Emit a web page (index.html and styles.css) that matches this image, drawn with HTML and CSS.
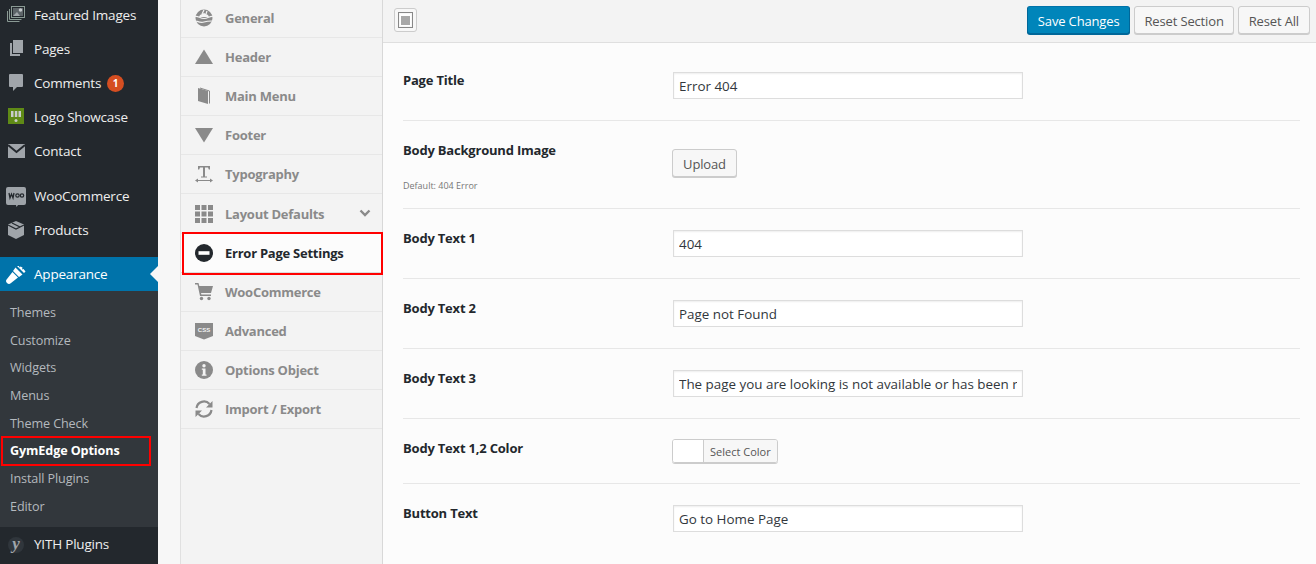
FILE: index.html
```html
<!DOCTYPE html>
<html lang="en">
<head>
  <meta charset="UTF-8">
  <title>GymEdge Options</title>
  <link rel="stylesheet" href="styles.css">
</head>
<body>
  <!-- WordPress admin menu -->
  <aside class="admin-menu">
    <ul class="menu-group first">
      <li class="menu-item">
        <svg class="menu-icon" viewBox="0 0 20 20"><g fill="none" stroke="#8a9a94" stroke-width="1"><rect x="5.5" y="1.5" width="13" height="11"/><path d="M3.5 4v10.500h12M1.500 6v10.500h12"/></g><rect x="7" y="3" width="10" height="8" fill="#5d6468"/><circle cx="14.500" cy="5" r="1.800" fill="#c4c8cb"/><path d="M7 11l4-4 3 4z" fill="#a0a5a9"/></svg>
        <span>Featured Images</span>
      </li>
      <li class="menu-item">
        <svg class="menu-icon" viewBox="0 0 20 20"><path d="M7 1h10v13H7z" fill="#a0a5aa"/><path d="M4 4h2v11h8v2H4z" fill="#a0a5aa"/></svg>
        <span>Pages</span>
      </li>
      <li class="menu-item">
        <svg class="menu-icon" viewBox="0 0 20 20"><path d="M4 1h12a1 1 0 0 1 1 1v11a1 1 0 0 1-1 1h-5l-4 4v-4H4a1 1 0 0 1-1-1V2a1 1 0 0 1 1-1z" fill="#a0a5aa"/></svg>
        <span>Comments</span>
        <b class="count-badge">1</b>
      </li>
      <li class="menu-item">
        <svg class="menu-icon" viewBox="0 0 20 20"><rect x="2" y="1" width="16" height="16" fill="#5f8a16"/><path d="M5 4h2.500v6H5zM8.800 4h2.500v6H8.800zM12.500 4H15v6h-2.500z" fill="#c9ccca"/><circle cx="10" cy="13.500" r="1.500" fill="#c9ccca"/></svg>
        <span>Logo Showcase</span>
      </li>
      <li class="menu-item">
        <svg class="menu-icon" viewBox="0 0 20 20"><path d="M2 3h17v14H2z" fill="#a0a5aa"/><path d="M2 4l8.500 7L19 4" fill="none" stroke="#23282d" stroke-width="2"/></svg>
        <span>Contact</span>
      </li>
    </ul>
    <ul class="menu-group">
      <li class="menu-item">
        <svg class="menu-icon woo-icon" viewBox="0 0 20 20"><path d="M2 0h16a2 2 0 0 1 2 2v14a2 2 0 0 1-2 2h-6l-1.500 2L10 18H2a2 2 0 0 1-2-2V2a2 2 0 0 1 2-2z" fill="#9ea3a8"/><path d="M3 6l1 5 1.500-4 1.500 4 1-5" fill="none" stroke="#23282d" stroke-width="1.300"/><circle cx="11.500" cy="8.500" r="1.700" fill="none" stroke="#23282d" stroke-width="1.200"/><circle cx="16" cy="8.500" r="1.700" fill="none" stroke="#23282d" stroke-width="1.200"/></svg>
        <span>WooCommerce</span>
      </li>
      <li class="menu-item">
        <svg class="menu-icon" viewBox="0 0 20 20"><path d="M10 1l8 3.500v10.500L10 19l-8-4V4.500z" fill="#a0a5aa"/><path d="M2 5l8 4 8-4M6 3l8 4" fill="none" stroke="#23282d" stroke-width="1.200"/></svg>
        <span>Products</span>
      </li>
    </ul>
    <ul class="menu-group">
      <li class="menu-item current">
        <svg class="menu-icon" viewBox="0 0 20 20"><path d="M11 2l7 7 1.500-1.500-2-2.500-1.500.5.500-2-2-1-1 1-.5-1.500zM9.500 3.500L7 7l6 6 3.500-2.500zM6.500 8L1 15a2.500 2.500 0 0 0 4 4l7-5.500z" fill="#fff"/></svg>
        <span>Appearance</span>
      </li>
      <li class="submenu">
        <a class="sub-item">Themes</a>
        <a class="sub-item">Customize</a>
        <a class="sub-item">Widgets</a>
        <a class="sub-item">Menus</a>
        <a class="sub-item">Theme Check</a>
        <a class="sub-item marked">GymEdge Options</a>
        <a class="sub-item">Install Plugins</a>
        <a class="sub-item">Editor</a>
      </li>
      <li class="menu-item">
        <svg class="menu-icon" viewBox="0 0 20 20"><circle cx="10" cy="11" r="8" fill="#30363c"/><text class="yith-mark" x="10" y="15" text-anchor="middle">y</text></svg>
        <span>YITH Plugins</span>
      </li>
    </ul>
  </aside>

  <div class="page-gap"></div>

  <!-- Options panel nav -->
  <nav class="options-nav">
    <a class="nav-item">
      <svg class="nav-icon" viewBox="0 0 18 18"><circle cx="9" cy="9" r="8.500" fill="#8a8a8a"/><path d="M0 7.500c3-1 5 2 9 2s6-3 9-2M1 12c3 1 5 2 8 1s5-1 8-1M9 1L7 5M12 2l-1 3" fill="none" stroke="#f3f3f3" stroke-width="1.200"/><path d="M5 6l4-2 4 2 1 2H4z" fill="#f3f3f3"/></svg>
      General
    </a>
    <a class="nav-item">
      <svg class="nav-icon" viewBox="0 0 18 18"><path d="M9 1.500l9 14.500H0z" fill="#8a8a8a"/></svg>
      Header
    </a>
    <a class="nav-item">
      <svg class="nav-icon" viewBox="0 0 18 18"><path d="M3 1l10 3v13L3 14z" fill="#8a8a8a"/><path d="M5 1l9.500 3v12.500" fill="none" stroke="#8a8a8a"/></svg>
      Main Menu
    </a>
    <a class="nav-item">
      <svg class="nav-icon" viewBox="0 0 18 18"><path d="M0 2h18L9 16.500z" fill="#8a8a8a"/></svg>
      Footer
    </a>
    <a class="nav-item">
      <svg class="nav-icon" viewBox="0 0 18 18"><path d="M3 1h12v3.500h-1.200L13 2.500H10v9h2v1H6v-1h2v-9H5l-.8 2H3z" fill="#8a8a8a"/><path d="M1 15.500h16" stroke="#8a8a8a"/><path d="M0 15.500L3 13.500v4zM18 15.500L15 13.500v4z" fill="#8a8a8a"/></svg>
      Typography
    </a>
    <a class="nav-item">
      <svg class="nav-icon" viewBox="0 0 18 18"><path d="M0 0h5v5H0zM6.500 0h5v5h-5zM13 0h5v5h-5zM0 6.500h5v5H0zM6.500 6.500h5v5h-5zM13 6.500h5v5h-5zM0 13h5v5H0zM6.500 13h5v5h-5zM13 13h5v5h-5z" fill="#8a8a8a"/></svg>
      Layout Defaults
      <svg class="nav-chevron" viewBox="0 0 12 8"><path d="M1.500 1.500L6 6l4.500-4.500" fill="none" stroke="#8a8a8a" stroke-width="2.400"/></svg>
    </a>
    <a class="nav-item active">
      <svg class="nav-icon" viewBox="0 0 18 18"><circle cx="9" cy="9" r="9" fill="#23282d"/><rect x="3.500" y="7.200" width="11" height="3.600" fill="#fff"/></svg>
      Error Page Settings
    </a>
    <a class="nav-item">
      <svg class="nav-icon" viewBox="0 0 18 18"><path d="M0 0h3.500l.8 3H18l-2 7H6l.4 1.500H16V13H5L2.500 1.500H0z" fill="#8a8a8a"/><circle cx="6.500" cy="15.500" r="1.700" fill="#8a8a8a"/><circle cx="14" cy="15.500" r="1.700" fill="#8a8a8a"/></svg>
      WooCommerce
    </a>
    <a class="nav-item">
      <svg class="nav-icon" viewBox="0 0 18 18"><path d="M0 1h18v13l-9 3.500L0 14z" fill="#8a8a8a"/><text class="css-mark" x="9" y="10" text-anchor="middle">CSS</text></svg>
      Advanced
    </a>
    <a class="nav-item">
      <svg class="nav-icon" viewBox="0 0 18 18"><circle cx="9" cy="9" r="9" fill="#8a8a8a"/><circle cx="9" cy="4.800" r="1.700" fill="#f3f3f3"/><path d="M6.800 7.500h3.700v6h1v1.300H6.800v-1.300h1v-4.700h-1z" fill="#f3f3f3"/></svg>
      Options Object
    </a>
    <a class="nav-item">
      <svg class="nav-icon" viewBox="0 0 18 18"><path d="M1.500 8A7.500 7.500 0 0 1 14.500 4M16.500 10A7.500 7.500 0 0 1 3.500 14" fill="none" stroke="#8a8a8a" stroke-width="2.200"/><path d="M17.500 1v6.500H11zM.5 17v-6.500H7z" fill="#8a8a8a"/></svg>
      Import / Export
    </a>
  </nav>

  <!-- Options form -->
  <main class="options-main">
    <header class="options-bar">
      <span class="layout-toggle">
        <svg viewBox="0 0 15 16" width="15" height="16"><rect x=".5" y=".5" width="14" height="15" fill="none" stroke="#888"/><rect x="2" y="2" width="11" height="12" fill="#fff"/><rect x="3" y="4" width="9" height="9" fill="#a8a8a8"/></svg>
      </span>
      <div class="bar-actions">
        <button class="btn btn-primary">Save Changes</button>
        <button class="btn btn-section">Reset Section</button>
        <button class="btn">Reset All</button>
      </div>
    </header>

    <section class="options-form">
      <div class="form-row row-title">
        <div class="row-label"><h4>Page Title</h4></div>
        <input class="text-input" type="text" value="Error 404">
      </div>
      <div class="form-row row-image">
        <div class="row-label">
          <h4>Body Background Image</h4>
          <p class="row-hint">Default: 404 Error</p>
        </div>
        <button class="btn btn-upload">Upload</button>
      </div>
      <div class="form-row">
        <div class="row-label"><h4>Body Text 1</h4></div>
        <input class="text-input" type="text" value="404">
      </div>
      <div class="form-row">
        <div class="row-label"><h4>Body Text 2</h4></div>
        <input class="text-input" type="text" value="Page not Found">
      </div>
      <div class="form-row">
        <div class="row-label"><h4>Body Text 3</h4></div>
        <input class="text-input" type="text" value="The page you are looking is not available or has been removed">
      </div>
      <div class="form-row row-color">
        <div class="row-label"><h4>Body Text 1,2 Color</h4></div>
        <div class="color-picker">
          <span class="color-swatch"></span>
          <span class="color-label">Select Color</span>
        </div>
      </div>
      <div class="form-row row-last">
        <div class="row-label"><h4>Button Text</h4></div>
        <input class="text-input" type="text" value="Go to Home Page">
      </div>
    </section>
  </main>
</body>
</html>
```

FILE: styles.css
```css
*, *::after {
  box-sizing: border-box;
  margin: 0;
  padding: 0;
}
html, body {
  height: 564px;
  overflow: hidden;
}
body {
  display: flex;
  font-family: "Open Sans", sans-serif;
  font-size: 13px;
  color: #444;
  background-color: #f7f7f7;
}

/* admin menu */
.admin-menu {
  width: 158px;
  flex-shrink: 0;
  height: 564px;
  overflow: hidden;
  background-color: #23282d;
}
.menu-group {
  list-style: none;
  margin-top: 11px;
}
.menu-group.first {
  margin-top: -2px;
}
.menu-group:nth-child(3) {
  margin-top: 10px;
}
.menu-item {
  position: relative;
  display: flex;
  align-items: center;
  height: 34px;
  font-size: 13.5px;
  letter-spacing: -0.2px;
  color: #eee;
}
.menu-icon {
  width: 20px;
  height: 20px;
  margin: 0 8px 0 6px;
  flex-shrink: 0;
}
.woo-icon {
  margin-top: 1px;
}
.yith-mark {
  font-family: "Liberation Serif", serif;
  font-size: 17px;
  font-style: italic;
  font-weight: 700;
  fill: #a0a5aa;
}
.menu-item.current {
  background-color: #0073aa;
  color: #fff;
}
/* little notch pointing at the page */
.menu-item.current::after {
  content: "";
  position: absolute;
  right: 0;
  top: 9px;
  border: 8px solid transparent;
  border-right-color: #f7f7f7;
}
.count-badge {
  width: 17px;
  height: 17px;
  margin-left: 6px;
  border-radius: 50%;
  background-color: #d54e21;
  color: #fff;
  font-size: 10px;
  font-weight: 700;
  letter-spacing: 0;
  line-height: 17px;
  text-align: center;
}
.submenu {
  display: flex;
  flex-direction: column;
  padding: 8px 0 6px;
  background-color: #32373c;
}
.sub-item {
  position: relative;
  height: 27.7px;
  padding-left: 10px;
  font-size: 12.6px;
  letter-spacing: -0.1px;
  line-height: 27.7px;
  color: #b4b9be;
}
.sub-item.marked {
  color: #fff;
  font-weight: 700;
}
.sub-item.marked::after {
  content: "";
  position: absolute;
  left: 1px;
  top: -1px;
  width: 150px;
  height: 30px;
  border: 2px solid #f00;
}

.page-gap {
  width: 22px;
  flex-shrink: 0;
}

/* options nav */
.options-nav {
  display: flex;
  flex-direction: column;
  width: 203px;
  flex-shrink: 0;
  margin-top: -1px;
  height: 565px;
  background-color: #f3f3f3;
  border-left: 1px solid #e0e0e0;
  border-right: 1px solid #d8d8d8;
}
.nav-item {
  position: relative;
  display: flex;
  align-items: center;
  height: 39.1px;
  flex-shrink: 0;
  padding-left: 14px;
  border-bottom: 1px solid #e7e7e7;
  font-size: 13px;
  font-weight: 700;
  letter-spacing: -0.25px;
  color: #8a8a8a;
}
.nav-icon {
  width: 18px;
  height: 18px;
  margin-right: 12px;
  flex-shrink: 0;
}
.css-mark {
  font-family: "Liberation Sans", sans-serif;
  font-size: 6px;
  font-weight: 700;
  letter-spacing: 0;
  fill: #f3f3f3;
}
.nav-chevron {
  width: 12px;
  height: 8px;
  margin: -2px 11px 0 auto;
}
.nav-item.active {
  background-color: #fcfcfc;
  color: #23282d;
  border-bottom-color: #dcdcdc;
}
.nav-item.active::after {
  content: "";
  position: absolute;
  left: 1px;
  top: -2px;
  width: 201px;
  height: 43px;
  border: 2px solid #f00;
}

/* options main */
.options-main {
  flex: 1;
  min-width: 0;
  background-color: #fcfcfc;
}
.options-bar {
  display: flex;
  align-items: center;
  justify-content: space-between;
  height: 43px;
  padding: 0 6px 2px 11px;
  background-color: #f3f3f3;
  border-bottom: 1px solid #dfdfdf;
}
.layout-toggle {
  display: flex;
  align-items: center;
  justify-content: center;
  width: 23px;
  height: 24px;
  border: 1px solid #ccc;
  border-radius: 3px;
  background-color: #f7f7f7;
}
.bar-actions {
  display: flex;
  gap: 4px;
}
.btn {
  height: 28px;
  padding: 1px 10px 0;
  border: 1px solid #ccc;
  border-radius: 3px;
  background-color: #f7f7f7;
  box-shadow: 0 1px 0 #ccc;
  font-family: "Open Sans", sans-serif;
  font-size: 13px;
  letter-spacing: -0.15px;
  color: #555;
}
.btn-section {
  padding: 1px 9px 0;
}
.btn-primary {
  background-color: #0085ba;
  border-color: #0073aa #006799 #006799;
  box-shadow: 0 1px 0 #006799;
  color: #fff;
}
.options-form {
  padding: 0 16px 0 20px;
}
.form-row {
  display: flex;
  align-items: flex-start;
  height: 70px;
  padding-top: 21px;
  border-bottom: 1px solid #e7e7e7;
}
.row-title {
  height: 78px;
  padding-top: 29px;
}
.row-image {
  height: 88px;
  padding-top: 28px;
}
.row-color {
  height: 65px;
}
.row-last {
  border-bottom: none;
}
.row-label {
  width: 270px;
  flex-shrink: 0;
}
.row-label h4 {
  font-size: 13px;
  font-weight: 700;
  letter-spacing: -0.2px;
  line-height: 18px;
  color: #23282d;
  margin-top: -1px;
}
.row-image .row-label h4 {
  margin-top: -8px;
}
.row-hint {
  margin-top: 20px;
  font-size: 9px;
  line-height: 14px;
  color: #777;
}
.text-input {
  width: 350px;
  height: 27px;
  padding: 0 5px;
  border: 1px solid #ddd;
  background-color: #fff;
  box-shadow: inset 0 1px 2px rgba(0, 0, 0, 0.07);
  font-family: "Open Sans", sans-serif;
  font-size: 13.4px;
  color: #32373c;
  outline: none;
}
.btn-upload {
  margin-left: -1px;
  width: 65px;
  padding: 1px 0 0;
}
.color-picker {
  display: flex;
  width: 106px;
  height: 24px;
  margin: -1px 0 0 -1px;
  border: 1px solid #ccc;
  border-radius: 3px;
  box-shadow: 0 1px 0 #ccc;
  overflow: hidden;
}
.color-swatch {
  width: 31px;
  background-color: #fff;
  border-right: 1px solid #ccc;
}
.color-label {
  flex: 1;
  padding-left: 6px;
  background-color: #f7f7f7;
  font-size: 11px;
  line-height: 23px;
  color: #555;
}
```
